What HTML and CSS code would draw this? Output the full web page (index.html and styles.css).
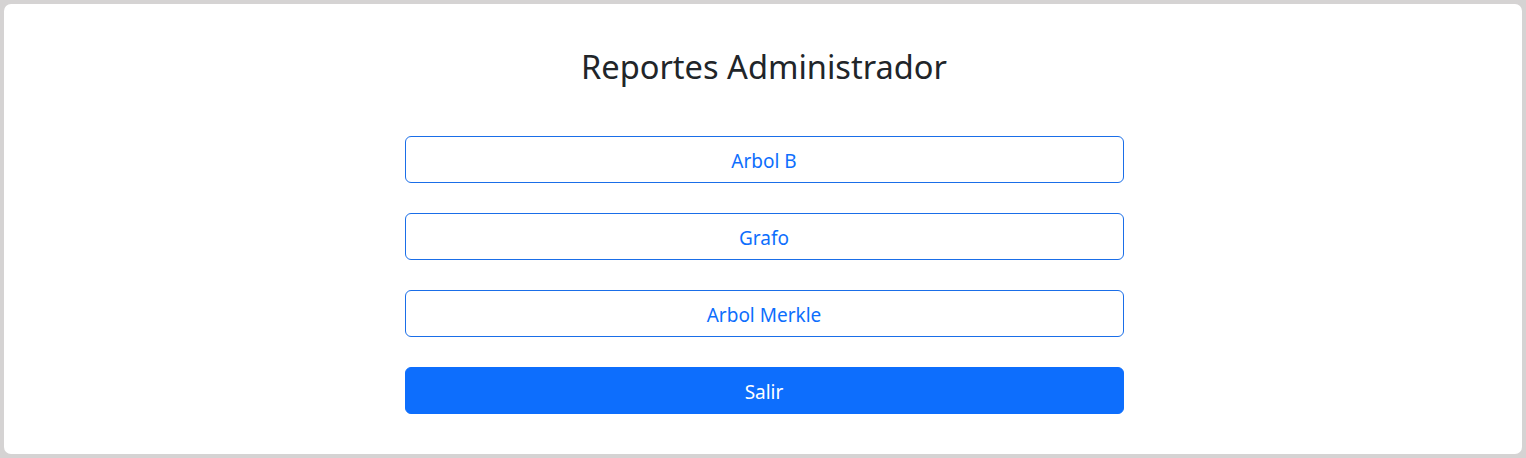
FILE: index.html
```html
<!DOCTYPE html>
<html lang="es">
<head>
<meta charset="utf-8">
<title>Reportes Administrador</title>
<link rel="stylesheet" href="styles.css">
</head>
<body>
<main class="card">
  <h2 class="title">Reportes Administrador</h2>
  <div class="actions">
    <button class="btn btn-outline" type="button">Arbol B</button>
    <button class="btn btn-outline" type="button">Grafo</button>
    <button class="btn btn-outline" type="button">Arbol Merkle</button>
    <button class="btn btn-primary" type="button">Salir</button>
  </div>
</main>
</body>
</html>
```
FILE: styles.css
```css
html, body {
  margin: 0;
  padding: 0;
}
body {
  background: #d5d3d3;
  padding: 4px;
  height: 458px;
  box-sizing: border-box;
  font-family: "Noto Sans", "Open Sans", sans-serif;
  color: #212529;
}
.card {
  background: #ffffff;
  border-radius: 7px;
  height: 450px;
  box-sizing: border-box;
  padding: 44px 0 0 0;
  display: flex;
  flex-direction: column;
  align-items: center;
}
.title {
  margin: 0;
  font-size: 32.6px;
  font-weight: 400;
  line-height: 38px;
  text-align: center;
  padding-left: 2px;
}
.actions {
  margin-top: 50px;
  width: 719px;
  margin-left: 2px;
  display: flex;
  flex-direction: column;
  gap: 30px;
}
.btn {
  height: 47px;
  box-sizing: border-box;
  border-radius: 6px;
  font-family: inherit;
  font-size: 19px;
  line-height: 1.5;
  padding: 3px 16px 0;
  cursor: pointer;
}
.btn-outline {
  background: #ffffff;
  color: #0d6efd;
  border: 1px solid #1a6ee8;
}
.btn-primary {
  background: #0d6efd;
  color: #ffffff;
  border: 1px solid #0d6efd;
}
```
